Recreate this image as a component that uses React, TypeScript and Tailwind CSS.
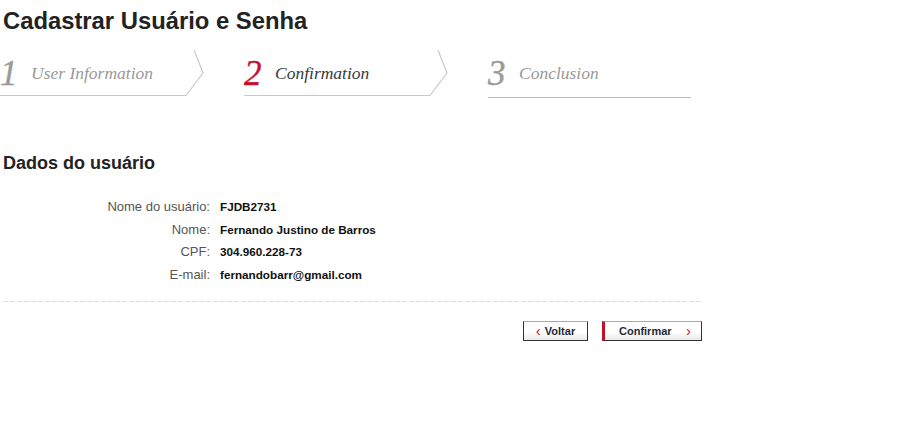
import type { ReactNode } from 'react'

const serif = { fontFamily: '"Liberation Serif", "Times New Roman", serif' }

type Step = { n: string; label: string; state: 'done' | 'active' | 'todo' }

const steps: Step[] = [
  { n: '1', label: 'User Information', state: 'done' },
  { n: '2', label: 'Confirmation', state: 'active' },
  { n: '3', label: 'Conclusion', state: 'todo' },
]

function Chevron() {
  return (
    <svg
      className="pointer-events-none absolute left-0 top-0"
      width="205"
      height="47"
      viewBox="0 0 205 47"
    >
      <polyline
        points="0,45.5 186,45.5 203,23 194,0"
        fill="none"
        stroke="#c9c9c9"
        strokeWidth="1.2"
      />
    </svg>
  )
}

function StepItem({ step, last }: { step: Step; last: boolean }) {
  const numColor =
    step.state === 'active' ? 'text-[#c8102e]' : 'text-[#9a9a9a]'
  const labelColor =
    step.state === 'active' ? 'text-[#333a44]' : 'text-[#999]'
  return (
    <div
      className={`relative flex h-[47px] w-[203px] items-center ${
        last ? 'border-b border-[#bdbdbd] h-[48px]' : ''
      }`}
    >
      {!last && <Chevron />}
      <span
        style={serif}
        className={`w-[31px] text-[35px] italic leading-none [-webkit-text-stroke:0.4px_currentColor] ${numColor}`}
      >
        {step.n}
      </span>
      <span style={serif} className={`text-[17.5px] italic ${labelColor}`}>
        {step.label}
      </span>
    </div>
  )
}

function Row({ label, value }: { label: string; value: string }) {
  return (
    <div className="flex leading-[22.7px]">
      <div className="w-[210px] shrink-0 text-right text-[13px] text-[#555]">
        {label}
      </div>
      <div className="pl-[10px] text-[11.7px] font-bold text-[#111]">{value}</div>
    </div>
  )
}

function Button({
  children,
  primary,
  className,
}: {
  children: ReactNode
  primary?: boolean
  className?: string
}) {
  return (
    <button
      className={`flex h-[20px] items-center border border-[#333] border-t-[#aaa] bg-[linear-gradient(#ffffff,#ffffff_55%,#e9e9e9)] text-[11px] font-bold text-[#1f2a36] ${
        primary ? 'border-l-[3px] border-l-[#c0102a]' : ''
      } ${className ?? ''}`}
    >
      {children}
    </button>
  )
}

export default function App() {
  return (
    <div
      className="min-h-[425px] w-[920px] bg-white"
      style={{ fontFamily: '"Liberation Sans", Arial, sans-serif' }}
    >
      <div className="w-[703px]">
        <h1 className="mt-[8px] pl-[3px] text-[23.8px] font-bold leading-[25px] text-[#222]">
          Cadastrar Usuário e Senha
        </h1>

        <div className="mt-[17px] flex gap-[41px]">
          {steps.map((s, i) => (
            <StepItem key={s.n} step={s} last={i === steps.length - 1} />
          ))}
        </div>

        <h2 className="mt-[55px] pl-[3px] text-[18px] font-bold leading-[21px] text-[#222]">
          Dados do usuário
        </h2>

        <div className="mt-[22px]">
          <Row label="Nome do usuário:" value="FJDB2731" />
          <Row label="Nome:" value="Fernando Justino de Barros" />
          <Row label="CPF:" value="304.960.228-73" />
          <Row label="E-mail:" value="fernandobarr@gmail.com" />
        </div>

        <div className="ml-[3px] mt-[14px] h-px bg-[repeating-linear-gradient(to_right,#dcdcdc_0,#dcdcdc_5px,transparent_5px,transparent_7px)]" />

        <div className="mt-[19px] flex justify-end gap-[14px] pr-[1px]">
          <Button className="w-[65px] justify-center gap-[4px]">
            <span className="text-[15px] font-normal leading-none text-[#c8102e]">‹</span>
            <span>Voltar</span>
          </Button>
          <Button primary className="w-[100px] justify-between pl-[14px] pr-[10px]">
            <span>Confirmar</span>
            <span className="text-[15px] font-normal leading-none text-[#c8102e]">›</span>
          </Button>
        </div>
      </div>
    </div>
  )
}
